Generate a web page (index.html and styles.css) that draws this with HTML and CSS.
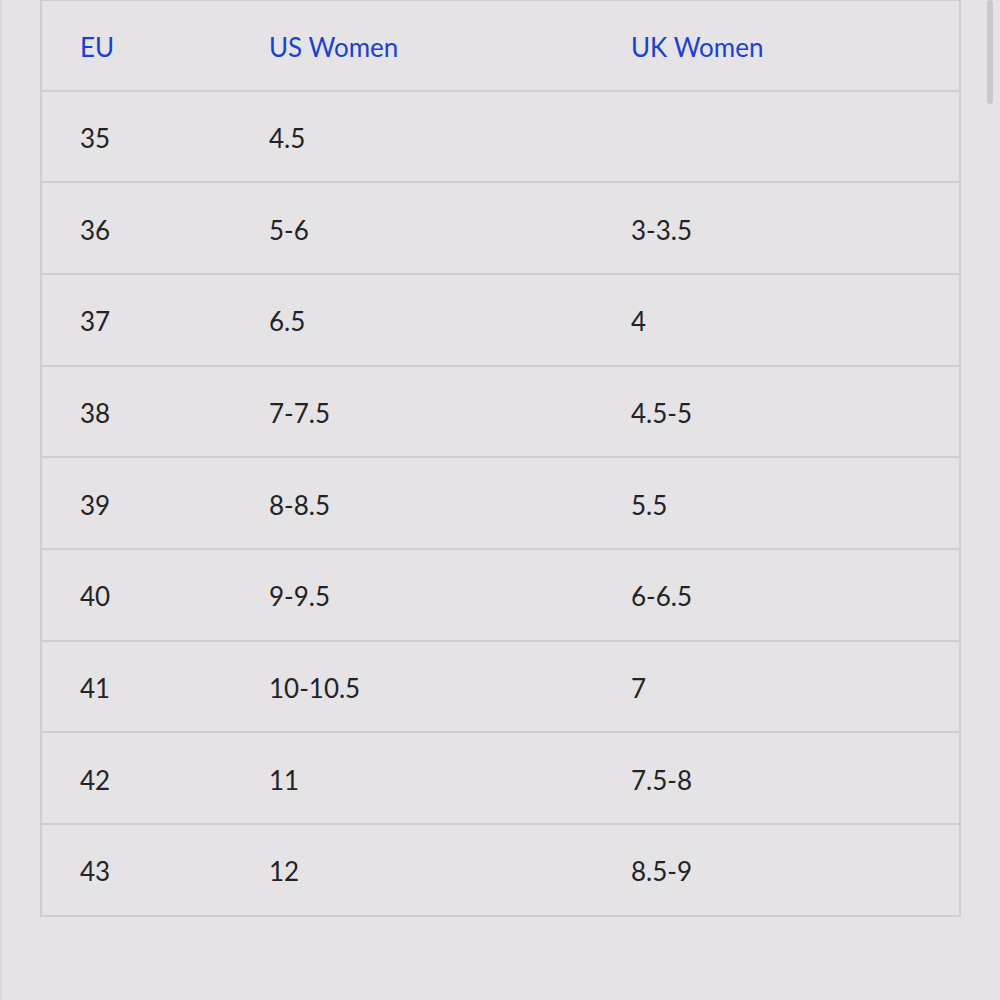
FILE: index.html
```html
<!DOCTYPE html>
<html>
<head>
<meta charset="utf-8">
<link rel="stylesheet" href="styles.css">
</head>
<body>
<div class="page">
  <table class="sizes">
    <colgroup><col class="c1"><col class="c2"><col class="c3"></colgroup>
    <thead>
      <tr><th>EU</th><th>US Women</th><th>UK Women</th></tr>
    </thead>
    <tbody>
      <tr><td>35</td><td>4.5</td><td></td></tr>
      <tr><td>36</td><td>5-6</td><td>3-3.5</td></tr>
      <tr><td>37</td><td>6.5</td><td>4</td></tr>
      <tr><td>38</td><td>7-7.5</td><td>4.5-5</td></tr>
      <tr><td>39</td><td>8-8.5</td><td>5.5</td></tr>
      <tr><td>40</td><td>9-9.5</td><td>6-6.5</td></tr>
      <tr><td>41</td><td>10-10.5</td><td>7</td></tr>
      <tr><td>42</td><td>11</td><td>7.5-8</td></tr>
      <tr><td>43</td><td>12</td><td>8.5-9</td></tr>
    </tbody>
  </table>
  <div class="scrollbar"></div>
</div>
</body>
</html>
```

FILE: styles.css
```css
html, body {
  margin: 0;
  padding: 0;
  background: #e5e3e6;
}
.page {
  position: relative;
  width: 1000px;
  height: 1000px;
  padding: 0 40px;
  box-sizing: border-box;
  border-left: 2px solid #d9d7da;
}
.sizes {
  width: 919px;
  margin-left: -2px;
  border-collapse: collapse;
  table-layout: fixed;
  font-family: Lato, "Liberation Sans", sans-serif;
  font-size: 26px;
  color: #232225;
  border: 2px solid #cfcdd0;
  border-top: 1px solid #cfcdd0;
}
.c1 { width: 190px; }
.c2 { width: 362px; }
.c3 { width: 367px; }
th, td {
  text-align: left;
  font-weight: normal;
  padding: 3px 0 0 38px;
  box-sizing: border-box;
  height: 91.7px;
  border-bottom: 2px solid #d0ced1;
}
th {
  color: #1c40cf;
  height: 90px;
}
.scrollbar {
  position: absolute;
  top: 0;
  left: 985px;
  width: 6px;
  height: 104px;
  border-radius: 3px;
  background: #cbc9cc;
}
```
